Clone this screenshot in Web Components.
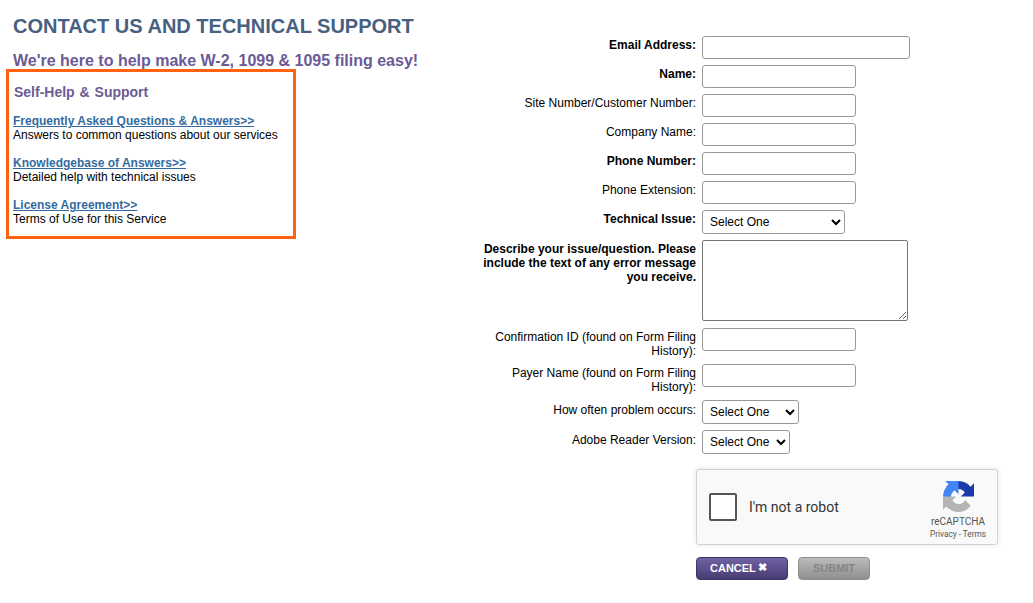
<!DOCTYPE html>
<html lang="en">
<head>
<meta charset="utf-8">
<title>Contact Us and Technical Support</title>
<style>
html, body { margin: 0; background: #fff; }
body { font: 12px/14px "Liberation Sans", Arial, sans-serif; color: #000; }
</style>
</head>
<body>
<support-page>
  <help-panel slot="left" heading="Self-Help &amp; Support">
    <help-link label="Frequently Asked Questions &amp; Answers&gt;&gt;">Answers to common questions about our services</help-link>
    <help-link label="Knowledgebase of Answers&gt;&gt;">Detailed help with technical issues</help-link>
    <help-link label="License Agreement&gt;&gt;">Terms of Use for this Service</help-link>
  </help-panel>

  <form-row slot="form" label="Email Address:" required type="text" width="208"></form-row>
  <form-row slot="form" label="Name:" required type="text" width="154"></form-row>
  <form-row slot="form" label="Site Number/Customer Number:" type="text" width="154"></form-row>
  <form-row slot="form" label="Company Name:" type="text" width="154"></form-row>
  <form-row slot="form" label="Phone Number:" required type="text" width="154"></form-row>
  <form-row slot="form" label="Phone Extension:" type="text" width="154"></form-row>
  <form-row slot="form" label="Technical Issue:" required type="select" width="143"></form-row>
  <form-row slot="form" label="Describe your issue/question. Please include the text of any error message you receive." required type="textarea" width="206"></form-row>
  <form-row slot="form" label="Confirmation ID (found on Form Filing History):" type="text" width="154"></form-row>
  <form-row slot="form" label="Payer Name (found on Form Filing History):" type="text" width="154"></form-row>
  <form-row slot="form" label="How often problem occurs:" type="select" width="97" low></form-row>
  <form-row slot="form" label="Adobe Reader Version:" type="select" width="88" low></form-row>

  <captcha-box slot="actions"></captcha-box>
  <div slot="actions" style="display:flex;gap:10px;margin-top:12px">
    <action-button kind="cancel">CANCEL<span style="font-size:10.5px;margin-left:2px;position:relative;top:-1px">✖</span></action-button>
    <action-button kind="submit">SUBMIT</action-button>
  </div>
</support-page>

<script>
/**
 * Builds a shadow root from a chunk of markup.
 *
 * @param {HTMLElement} host - The custom element.
 * @param {string} html - Its styles and markup.
 * @returns {ShadowRoot} The open shadow root.
 */
function shadow(host, html) {
  const root = host.attachShadow({ mode: 'open' })
  const template = document.createElement('template')
  template.innerHTML = html
  root.appendChild(template.content.cloneNode(true))
  return root
}

// The page: title and help on the left, the form on the right.
customElements.define('support-page', class extends HTMLElement {
  constructor() {
    super()
    shadow(this, `
<style>
:host { display: flex; align-items: flex-start; }
.left { flex: 0 0 476px; box-sizing: border-box; padding: 15px 0 0 6px; }
h1 { margin: 0 0 0 7px; font: bold 20px/23px "Liberation Sans", Arial, sans-serif; color: #47607f; }
h2 { margin: 13px 0 -1px 7px; font: bold 16px/19px "Liberation Sans", Arial, sans-serif; color: #6b5b95; white-space: nowrap; }
.right { padding-top: 36px; display: flex; flex-direction: column; }
.rows { display: flex; flex-direction: column; gap: 6px; }
.actions { margin: 15px 0 0 220px; }
</style>
<div class="left">
  <h1>CONTACT US AND TECHNICAL SUPPORT</h1>
  <h2>We're here to help make W-2, 1099 &amp; 1095 filing easy!</h2>
  <slot name="left"></slot>
</div>
<div class="right">
  <div class="rows"><slot name="form"></slot></div>
  <div class="actions"><slot name="actions"></slot></div>
</div>`)
  }
})

// Orange box holding the self-help links.
customElements.define('help-panel', class extends HTMLElement {
  constructor() {
    super()
    const root = shadow(this, `
<style>
:host { display: block; box-sizing: border-box; width: 290px; height: 170px; border: 3px solid #ff6211; padding: 12px 0 0 4px; }
h3 { margin: 0 0 14px 1px; font: bold 14px/16px "Liberation Sans", Arial, sans-serif; color: #6b5b95; word-spacing: 1px; }
.links { display: flex; flex-direction: column; gap: 14px; }
</style>
<h3></h3>
<div class="links"><slot></slot></div>`)
    root.querySelector('h3').textContent = this.getAttribute('heading')
  }
})

// A bold link with a line of description under it.
customElements.define('help-link', class extends HTMLElement {
  constructor() {
    super()
    const root = shadow(this, `
<style>
:host { display: block; font-size: 12px; line-height: 14px; }
a { display: block; width: max-content; font-weight: bold; color: #336b9f; text-decoration: underline; }
</style>
<a href="#"></a>
<slot></slot>`)
    root.querySelector('a').textContent = this.getAttribute('label')
  }
})

// Label on the right of its column, followed by one control.
customElements.define('form-row', class extends HTMLElement {
  constructor() {
    super()
    const type = this.getAttribute('type')
    const width = this.getAttribute('width')
    let control = '<input type="text">'
    if (type === 'select') {
      control = '<select><option>Select One</option></select>'
    } else if (type === 'textarea') {
      control = '<textarea></textarea>'
    }
    const root = shadow(this, `
<style>
:host { display: grid; grid-template-columns: 220px auto; column-gap: 6px; align-items: start; font-size: 12px; line-height: 14px; }
label { padding-top: 2px; text-align: right; }
:host([required]) label { font-weight: bold; }
:host([low]) label { padding-top: 3px; }
input, select, textarea { display: block; box-sizing: border-box; margin: 0; width: ${width}px; background: #fff; font: 12px "Liberation Sans", Arial, sans-serif; color: #000; }
input { height: 23px; border: 1px solid #999; border-radius: 3px; padding: 1px 4px; }
select { height: 24px; border: 1px solid #999; border-radius: 3px; padding: 0 0 0 3px; }
textarea { height: 81px; margin-bottom: 1px; border: 1px solid #767676; border-radius: 2px; padding: 2px; }
</style>
<label></label>
${control}`)
    root.querySelector('label').textContent = this.getAttribute('label')
  }
})

// The recaptcha widget.
customElements.define('captcha-box', class extends HTMLElement {
  constructor() {
    super()
    const arm = 'M64 32V4.7l-7.2 7.2C50.900 4.700 42 .1 32 .1c-10.400 0-19.600 5-25.400 12.600l11.700 11.900a15.600 15.600 0 0 1 4.800-5.300c2-1.600 4.900-2.900 9-2.900 5.500 0 9.900 3 13 7.300l-8.300 8.300z'
    shadow(this, `
<style>
:host { display: flex; align-items: center; box-sizing: border-box; width: 302px; height: 76px; background: #f9f9f9; border: 1px solid #d3d3d3; border-radius: 3px; box-shadow: 0 0 4px 1px rgba(0,0,0,.08); font-family: Roboto, "Liberation Sans", Arial, sans-serif; }
.check { box-sizing: border-box; width: 28px; height: 28px; margin-left: 12px; background: #fff; border: 2px solid #555; border-radius: 2px; }
.text { flex: 1; margin-left: 12px; font-size: 14px; color: #333; }
.brand { align-self: flex-start; width: 70px; margin: 11px 4px 0 0; display: flex; flex-direction: column; align-items: center; color: #555; }
svg { display: block; width: 31px; height: 31px; margin-bottom: 3px; }
.name { font-size: 10px; line-height: 13px; }
.terms { font-size: 8.25px; line-height: 12px; }
</style>
<div class="check"></div>
<div class="text">I'm not a robot</div>
<div class="brand">
  <svg viewBox="0 0 64 64" aria-hidden="true">
    <path fill="#1c3aa9" d="${arm}"/>
    <path fill="#4285f4" d="${arm}" transform="rotate(-90 32 32)"/>
    <path fill="#b5b5b5" d="${arm}" transform="rotate(180 32 32)"/>
  </svg>
  <div class="name">reCAPTCHA</div>
  <div class="terms">Privacy - Terms</div>
</div>`)
  }
})

// Purple cancel button or greyed out submit button.
customElements.define('action-button', class extends HTMLElement {
  constructor() {
    super()
    shadow(this, `
<style>
:host { display: block; box-sizing: border-box; height: 23px; border-radius: 4px; font: bold 11px/21px "Liberation Sans", Arial, sans-serif; white-space: nowrap; }
:host([kind="cancel"]) { width: 92px; padding-left: 13px; color: #fff; background: linear-gradient(#7162a3, #483c73); border: 1px solid #3f3566; }
:host([kind="submit"]) { width: 72px; text-align: center; color: #858585; background: linear-gradient(#bcbcbc, #8e8e8e); border: 1px solid #8f8f8f; }
</style>
<slot></slot>`)
  }
})
</script>
</body>
</html>
